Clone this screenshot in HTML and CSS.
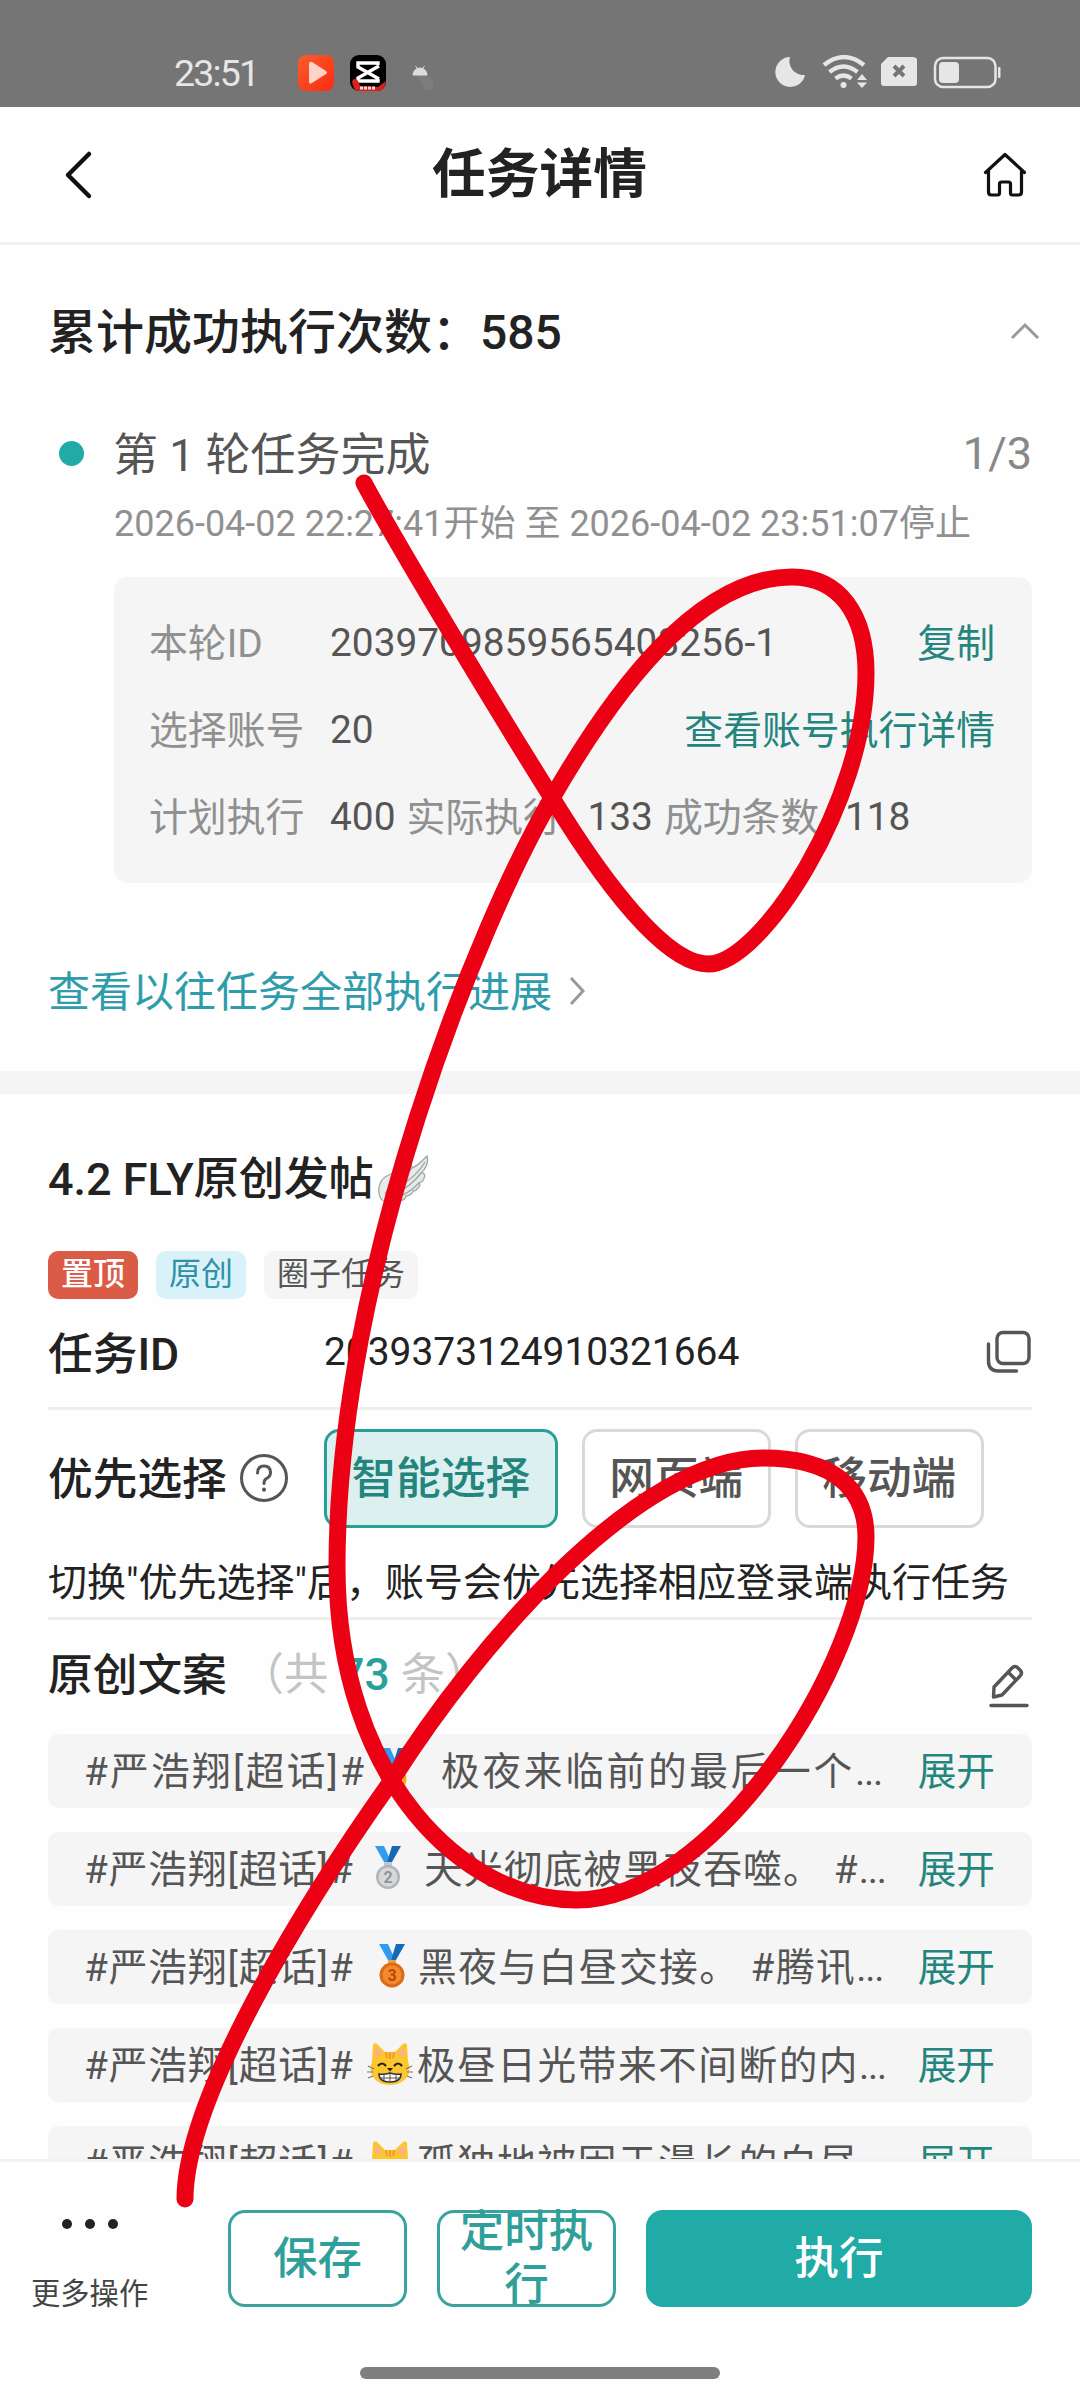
FILE: index.html
```html
<!DOCTYPE html>
<html lang="zh-CN">
<head>
<meta charset="utf-8">
<title>任务详情</title>
<link rel="stylesheet" href="styles.css">
</head>
<body>
<div class="screen">
  <div class="status">
    <span class="clock">23:51</span>
    <svg class="apps" width="140" height="40" viewBox="0 0 140 40">
      <defs><linearGradient id="play" x2="1" y2="1"><stop stop-color="#f75f2c"/><stop offset="1" stop-color="#fb2a10"/></linearGradient></defs>
      <rect x="1" y="2" width="36" height="36" rx="8" fill="url(#play)"/>
      <path d="M12 11v18q0 3 3 1l14-9q2-1 0-3L15 9q-3-1-3 2z" fill="#ffd3c8"/>
      <rect x="53" y="2" width="36" height="36" rx="9" fill="#000"/>
      <path d="M81 12v-2H61v4l21 12M82 13L61 25v3h20v-2" fill="none" stroke="#fff" stroke-width="3.4"/>
      <path d="M55 28q4-5 7 2l1 3 18 1 8-6q-1 10-9 10H62q-6 0-7-10z" fill="#d8201f"/>
      <path d="M63 35h16" stroke="#ffd9cf" stroke-width="3" stroke-dasharray="3 1"/>
      <path d="M118 22h13l5 6v9h-7z" fill="#7c7c7c"/>
      <path d="M116 22a7 7 0 0 1 14 0zM118.500 13l2 3M127.500 13l-2 3" fill="#ddd" stroke="#ddd" stroke-width="1"/>
    </svg>
    <svg class="system" width="230" height="36" viewBox="0 0 230 36">
      <g fill="#e6e6e6">
        <path d="M15 2a15 15 0 1 0 15 18A14 14 0 0 1 15 2z"/>
        <circle cx="68.500" cy="30" r="3"/>
        <path d="M82 25l5-6 5 6zM82 27.500h10l-5 5.500z"/>
        <path d="M113 2h24q5 0 5 3v23q0 3-3 3h-30q-3 0-3-3V9z"/>
        <rect x="164" y="7" width="20" height="21" rx="4"/>
        <rect x="223" y="12" width="2.500" height="11" rx="1"/>
      </g>
      <g fill="none" stroke="#e6e6e6" stroke-width="4.200">
        <path d="M49 10q20-16 40 0M54.500 17q14-11 28 0M60.500 23.500q8-6 16 0"/>
        <rect x="160" y="3" width="60.500" height="29" rx="8" stroke-width="2.500"/>
      </g>
      <path d="M119 11l10 10M129 11l-10 10" stroke="#757575" stroke-width="4"/>
    </svg>
  </div>
  <header class="header">
    <svg width="40" height="60" viewBox="0 0 40 60" fill="none" stroke="#111" stroke-width="4.500" stroke-linecap="round" stroke-linejoin="round"><path d="M31 9L10 30l21 21"/></svg>
    <h1>任务详情</h1>
    <svg width="50" height="50" viewBox="0 0 50 50" fill="none" stroke="#111" stroke-width="3.200" stroke-linecap="round" stroke-linejoin="round"><path d="M5.500 22.500L25 4.500l19.500 18M8.500 20v22q0 3 3 3h6q2 0 2-2V34q0-2 2-2h7q2 0 2 2v9q0 2 2 2h6q3 0 3-3V20"/></svg>
  </header>

  <section class="progress">
    <div class="total"><span>累计成功执行次数：585</span>
      <svg width="30" height="20" viewBox="0 0 30 20" fill="none" stroke="#999" stroke-width="3"><path d="M2 17L15 4l13 13"/></svg>
    </div>
    <div class="round"><i class="dot"></i><span class="name">第 1 轮任务完成</span><span class="count">1/3</span></div>
    <div class="period">2026-04-02 22:27:41开始 至 2026-04-02 23:51:07停止</div>
    <div class="card">
      <div class="line"><span class="label">本轮ID</span><span>2039709859565408256-1</span><a>复制</a></div>
      <div class="line"><span class="label">选择账号</span><span>20</span><a>查看账号执行详情</a></div>
      <div class="line"><span class="label">计划执行</span><span>400</span><span class="label more">实际执行</span><span>133</span><span class="label more">成功条数</span><span>118</span></div>
    </div>
    <div class="history"><span>查看以往任务全部执行进展</span>
      <svg width="18" height="30" viewBox="0 0 18 30" fill="none" stroke="#999" stroke-width="3"><path d="M2 2l12 13L2 28"/></svg>
    </div>
  </section>

  <section class="task">
    <div class="title"><span>4.2 FLY原创发帖</span>
      <svg width="54" height="50" viewBox="0 0 54 50" fill="#e6ebe7" stroke="#9fa6a2" stroke-width="1.300"><path d="M4 45C-1 35 3 24 12 21C20 17 28 13 34 8L35 14C41 12 45 7 50 2C52 9 48 16 44 19C50 18 48 27 42 29C45 30 40 37 36 37C36 40 31 42 29 42C28 47 21 48 17 45C12 49 6 48 4 45z"/><path d="M14 36C28 30 41 20 48 8M16 40C27 36 36 30 44 19M20 43C28 41 36 35 42 29M35 14C31 20 24 25 16 28M8 40q5-9 14-12" fill="none"/></svg>
    </div>
    <div class="tags"><span class="tag top">置顶</span><span class="tag orig">原创</span><span class="tag circle">圈子任务</span></div>
    <div class="idrow"><b>任务ID</b><span>2039373124910321664</span>
      <svg width="48" height="48" viewBox="0 0 48 48" fill="none" stroke="#555" stroke-width="3.400" stroke-linecap="round"><rect x="13" y="3.500" width="32" height="31" rx="6"/><path d="M4.500 15v17q0 10 10 10h18"/></svg>
    </div>
    <div class="prefer"><b>优先选择</b>
      <svg width="50" height="50" viewBox="0 0 50 50" fill="none" stroke="#555" stroke-width="3" stroke-linecap="round"><circle cx="25" cy="25" r="22.500"/><path d="M18.500 20q0-7 6.500-7t6.500 6.500q0 4-4 6-2.500 1.500-2.500 5"/><path d="M25 36.500v.2" stroke-width="4"/></svg>
      <span class="opt on">智能选择</span><span class="opt">网页端</span><span class="opt">移动端</span>
    </div>
    <p class="hint">切换"优先选择"后，账号会优先选择相应登录端执行任务</p>
    <div class="copyhead"><b>原创文案</b><span class="num">（共 <em>73</em> 条）</span>
      <svg width="42" height="44" viewBox="0 0 42 44" fill="none" stroke="#555" stroke-width="3.400" stroke-linejoin="round"><path d="M5.500 33l.5-10L24 4q3-3 6 0l2 2q3 3 0 6L14 31zM20 8l8 8"/><path d="M3 41.500h36" stroke-linecap="round"/></svg>
    </div>
    <div class="list">
      <div class="item r1"><span class="pre">#严浩翔[超话]#</span>
        <svg class="emo" width="48" height="48" viewBox="0 0 48 48"><path d="M11 1h9l5 11-2 5h-3z" fill="#2f9cf0"/><path d="M28 1h9l-9 16h-5z" fill="#1769b5"/><path d="M20 17h8v4h-8z" fill="#f2b62e"/><circle cx="24" cy="32" r="12.500" fill="#f2a91e"/><circle cx="24" cy="32" r="9.500" fill="#ffca3a"/></svg>
        <span class="txt">极夜来临前的最后一个<i>...</i></span><a>展开</a></div>
      <div class="item r2"><span class="pre">#严浩翔[超话]#</span>
        <svg class="emo" width="48" height="48" viewBox="0 0 48 48"><path d="M11 1h9l5 11-2 5h-3z" fill="#2f9cf0"/><path d="M28 1h9l-9 16h-5z" fill="#1769b5"/><path d="M20 17h8v4h-8z" fill="#bfc7cc"/><circle cx="24" cy="32" r="12" fill="#b0b5b9"/><circle cx="24" cy="32" r="9.500" fill="#d6d8da"/><text x="24" y="38" text-anchor="middle" class="medal" fill="#8f9498">2</text></svg>
        <span class="txt">天光彻底被黑夜吞噬。 #<i>...</i></span><a>展开</a></div>
      <div class="item r3"><span class="pre">#严浩翔[超话]#</span>
        <svg class="emo" width="48" height="48" viewBox="0 0 48 48"><path d="M11 1h9l5 11-2 5h-3z" fill="#2f9cf0"/><path d="M28 1h9l-9 16h-5z" fill="#1769b5"/><path d="M20 17h8v4h-8z" fill="#f0a04b"/><circle cx="24" cy="32" r="12.500" fill="#d96a18"/><circle cx="24" cy="32" r="9.500" fill="#f58a2c"/><text x="24" y="38" text-anchor="middle" class="medal" fill="#b54a08">3</text></svg>
        <span class="txt">黑夜与白昼交接。 #腾讯<i>...</i></span><a>展开</a></div>
      <div class="item r4"><span class="pre">#严浩翔[超话]#</span>
        <svg class="emo" width="48" height="48" viewBox="0 0 48 48"><use href="#cat"/></svg>
        <span class="txt">极昼日光带来不间断的内<i>...</i></span><a>展开</a></div>
      <div class="item r4"><span class="pre">#严浩翔[超话]#</span>
        <svg class="emo" width="48" height="48" viewBox="0 0 48 48"><g id="cat"><path d="M6 20L7 4q1-3 4-1l8 8h10l8-8q3-2 4 1l1 16q3 10-1 16-6 8-17 8T7 36q-4-6-1-16z" fill="#fcc62f"/><path d="M9 16l1-10 7 7zM39 16L38 6l-7 7z" fill="#f9b08c"/><path d="M20 11l1 6M24 11v7M28 11l-1 6" stroke="#f39a2c" stroke-width="2"/><path d="M12 25q4-5 8 0M28 25q4-5 8 0" fill="none" stroke="#222" stroke-width="2.200"/><path d="M2 25l6 3M1 31h6M2 37l5-2M46 25l-6 3M47 31h-6M46 37l-5-2" stroke="#777" stroke-width="1.200"/><path d="M21 27h6l-3 3.500z" fill="#222"/><path d="M13 33q5 1 11-1 6 2 11 1 0 8-11 8t-11-8z" fill="#fff" stroke="#333" stroke-width="1.500"/><path d="M18 34v5M24 33v7M30 34v5M14 37h20" stroke="#555" fill="none"/></g></svg>
        <span class="txt">孤独地被困于漫长的白昼<i>...</i></span><a>展开</a></div>
    </div>
  </section>

  <footer class="footer">
    <div class="actions">
      <div class="more-ops"><div class="dots"><i></i><i></i><i></i></div><span>更多操作</span></div>
      <div class="btn">保存</div><div class="btn">定时执行</div><div class="btn fill">执行</div>
    </div>
    <div class="pill"></div>
  </footer>

  <svg class="scribble" width="1080" height="2400" viewBox="0 0 1080 2400" fill="none" stroke="#eb0014" stroke-width="17" stroke-linecap="round" stroke-linejoin="round"><path d="M364 483C400 550 500 715 552 798C590 860 660 964 708 964C762 964 866 800 866 673C866 615 840 577 792 577C700 577 617 685 552 798C480 920 337 1270 337 1567C337 1780 465 1900 576 1900C715 1900 866 1660 866 1537C866 1490 835 1458 763 1458C640 1458 480 1640 390 1783C300 1910 185 2100 185 2199"/></svg>
</div>
</body>
</html>
```
FILE: styles.css
```css
* { box-sizing: border-box; }
body { margin: 0; background: #fff; font-family: Roboto, "Noto Sans CJK SC", sans-serif; color: #222; }
svg { display: block; flex: none; }
.screen { position: relative; width: 1080px; height: 2400px; overflow: hidden; display: flex; flex-direction: column; background: #fefefe; white-space: nowrap; }
.status { height: 107px; flex: none; background: #757575; display: flex; align-items: center; padding: 38px 75px 0 174px; }
.clock { width: 123px; font-size: 37.500px; letter-spacing: -1.800px; color: #e6e6e6; line-height: 40px; }
.system { margin-left: auto; }
.header { height: 138px; flex: none; display: flex; align-items: center; justify-content: space-between; padding: 0 50px 0 58px; border-bottom: 3px solid #f1f1f1; background: #fff; }
.header h1 { margin: 0; font-size: 53.700px; line-height: 60px; font-weight: 700; padding: 1px 0 0 1px; }

.progress { height: 826px; flex: none; padding: 0 48px; display: flex; flex-direction: column; }
.total { margin-top: 54px; height: 64px; display: flex; align-items: center; justify-content: space-between; font-size: 48px; font-weight: 500; }
.total span { padding-bottom: 7px; }
.total svg { margin-right: -8px; }
.round { margin-top: 60px; height: 60px; display: flex; align-items: center; font-size: 45px; color: #555; }
.name { padding-bottom: 4px; }
.dot { width: 25px; height: 25px; border-radius: 50%; background: #20aba6; margin: 0 29px 0 11px; }
.count { margin-left: auto; color: #888; }
.period { margin: 16px 0 0 66px; height: 50px; line-height: 50px; font-size: 36px; color: #909090; }
.card { margin: 28px 0 0 66px; height: 306px; border-radius: 14px; background: #f5f5f5; padding: 22px 37px 0 35px; font-size: 38.850px; color: #555; }
.line { height: 87px; display: flex; align-items: center; }
.label { width: 181px; color: #909090; padding-bottom: 5px; }
.label.more { margin-left: 11px; }
.line a { margin-left: auto; padding-bottom: 5px; }
a { color: #23857d; }
.history { margin-top: 78px; height: 60px; display: flex; align-items: center; gap: 17px; font-size: 42px; color: #2f9cac; }
.history span { padding-bottom: 5px; }

.task { flex: none; height: 1088px; overflow: hidden; border-top: 23px solid #f5f5f5; padding: 0 48px; }
.title { margin-top: 55px; height: 60px; display: flex; align-items: center; gap: 3px; font-size: 45px; font-weight: 500; }
.title span { padding-bottom: 7px; }
.tags { margin-top: 42px; display: flex; gap: 18px; }
.tag { height: 48px; line-height: 46px; padding: 0 13px; border-radius: 10px; font-size: 32px; }
.top { background: #da5b46; color: #fff; font-weight: 500; }
.orig { background: #d9f2f9; color: #2f90a6; }
.circle { background: #f5f5f5; color: #555; }
b { font-weight: 500; font-size: 44.700px; }
.idrow { height: 111px; display: flex; align-items: center; padding-bottom: 4px; border-bottom: 3px solid #eee; font-size: 38.900px; }
.idrow b { width: 276px; padding-bottom: 2px; }
.idrow svg { margin: 3px 0 0 auto; }
.prefer { height: 136px; display: flex; align-items: center; }
.prefer b { padding-bottom: 5px; }
.prefer svg { margin: 0 35px 0 12px; }
.opt { height: 99px; line-height: 95px; border: 3px solid #d9d9d9; border-radius: 15px; padding: 0 24px; margin-right: 24px; font-size: 44.700px; color: #555; font-weight: 500; background: #fff; }
.opt:not(.on) { padding: 0 24px 0 24px; width: 189px; text-align: center; padding: 0; }
.opt.on { width: 234px; padding: 0; text-align: center; border-color: #2a9f97; color: #23857d; background: #dcf0ef; }
.hint { margin: 0; height: 74px; line-height: 74px; border-bottom: 3px solid #eee; font-size: 39px; }
.copyhead { height: 114px; display: flex; align-items: center; padding-bottom: 12px; }
.num { margin-left: 13px; font-size: 44.300px; color: #c4c4c4; }
.num em { font-style: normal; font-weight: 500; color: #2aa09a; }
.copyhead svg { margin: 29px 2px 0 auto; }
.list { display: flex; flex-direction: column; gap: 24px; }
.item { height: 74px; flex: none; display: flex; align-items: center; border-radius: 10px; background: #f5f5f5; padding: 0 37px 0 36px; font-size: 38.700px; color: #555; }
.item > span, .item a { padding-bottom: 6px; }
.item a { margin-left: auto; }
.item .txt { width: 441px; }
.item i { font-style: normal; letter-spacing: -1.200px; }
.pre { width: 282px; letter-spacing: .9px; }
.r1 .pre { letter-spacing: 2.300px; }
.r1 .txt { letter-spacing: 2.700px; margin-left: 27px; }
.r2 .txt { letter-spacing: 1.200px; margin-left: 12px; width: 459px; }
.r3 .txt { letter-spacing: 1.500px; margin-left: 2px; width: 464px; }
.r4 .txt { letter-spacing: 1.500px; margin-left: 3px; width: 466px; }
.r1 .emo { position: relative; left: 4px; }
.r2 .emo { margin-left: -2px; }
.r3 .emo { margin-left: 2px; }
.medal { font-size: 16px; font-weight: 700; }

.footer { flex: none; height: 241px; border-top: 3px solid #f1f1f1; background: #fefefe; display: flex; flex-direction: column; align-items: center; justify-content: space-between; padding: 48px 0 21px; }
.actions { width: 100%; display: flex; padding: 0 48px 0 31px; }
.more-ops { width: 197px; font-size: 29.300px; color: #444; }
.dots { display: flex; gap: 13px; padding: 9px 0 0 31px; }
.dots i { width: 10px; height: 10px; border-radius: 50%; background: #222; }
.more-ops span { display: block; margin-top: 47px; line-height: 36px; }
.btn { width: 179px; height: 97px; border: 3px solid #3aa39e; border-radius: 17px; color: #2f9f99; font-size: 44.500px; font-weight: 500; line-height: 53px; white-space: normal; text-align: center; display: flex; align-items: center; justify-content: center; margin-right: 30px; padding: 1px 18px 0; }
.btn.fill { width: 386px; margin: 0 0 0 auto; background: #20aba6; border-color: #20aba6; color: #fff; }
.pill { width: 360px; height: 12px; border-radius: 6px; background: #7f7f7f; }
.scribble { position: absolute; left: 0; top: 0; }
```
